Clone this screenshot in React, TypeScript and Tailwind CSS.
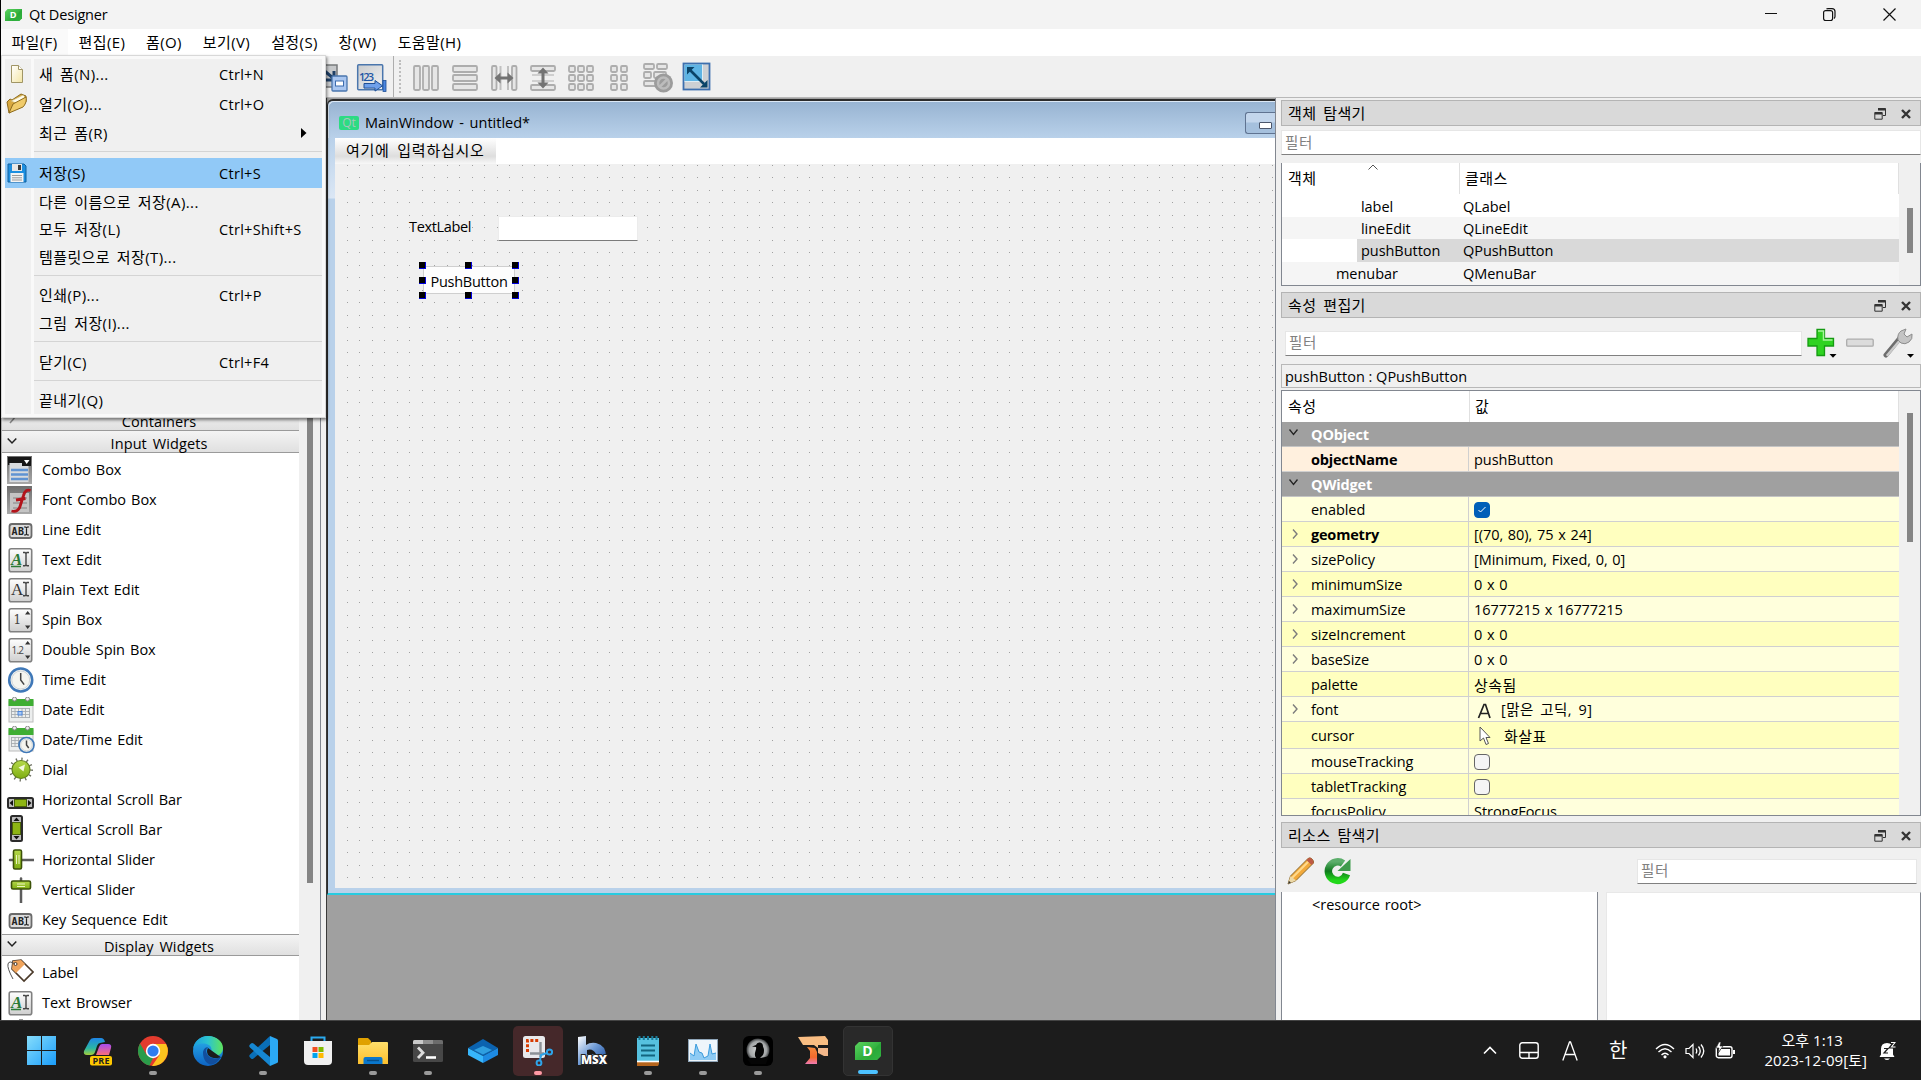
import type { ReactNode } from "react";
import clsx from "clsx";

const menus = ["파일(F)", "편집(E)", "폼(O)", "보기(V)", "설정(S)", "창(W)", "도움말(H)"];
const menuWidths = ["w-[67px]", "w-[68px]", "w-[56px]", "w-[69px]", "w-[67px]", "w-[59px]", "w-[85px]"];

const ko = "text-[15px] tracking-[0.4px] [word-spacing:2.5px]";

/* ---------- small shared pieces ---------- */

function Svg({ w = 26, h = 26, box, children, className }: { w?: number; h?: number; box?: string; children: ReactNode; className?: string }) {
  return (
    <svg width={w} height={h} viewBox={box ?? `0 0 ${w} ${h}`} className={clsx("shrink-0", className)} fill="none">
      {children}
    </svg>
  );
}

function Gradients() {
  return (
    <svg width="0" height="0" className="absolute">
      <defs>
        <linearGradient id="silver" x1="0" y1="0" x2="0" y2="1">
          <stop offset="0" stopColor="#ffffff" />
          <stop offset="1" stopColor="#cfcfcf" />
        </linearGradient>
        <linearGradient id="silver2" x1="0" y1="0" x2="1" y2="1">
          <stop offset="0" stopColor="#c9cbcd" />
          <stop offset="1" stopColor="#f1f2f3" />
        </linearGradient>
        <linearGradient id="dark" x1="0" y1="0" x2="0" y2="1">
          <stop offset="0" stopColor="#6e6e6e" />
          <stop offset="1" stopColor="#a9a9a9" />
        </linearGradient>
        <linearGradient id="winblue" x1="0" y1="0" x2="1" y2="1">
          <stop offset="0" stopColor="#86ddfb" />
          <stop offset="1" stopColor="#1a9dfb" />
        </linearGradient>
        <linearGradient id="green" x1="0" y1="0" x2="1" y2="1">
          <stop offset="0" stopColor="#5bd35f" />
          <stop offset="0.6" stopColor="#2fae3c" />
          <stop offset="1" stopColor="#44c950" />
        </linearGradient>
        <linearGradient id="lime" x1="0" y1="0" x2="0" y2="1">
          <stop offset="0" stopColor="#b6d94a" />
          <stop offset="1" stopColor="#7fae12" />
        </linearGradient>
        <linearGradient id="folder" x1="0" y1="0" x2="0" y2="1">
          <stop offset="0" stopColor="#ffdf6b" />
          <stop offset="1" stopColor="#fcbf2d" />
        </linearGradient>
        <linearGradient id="page" x1="0" y1="0" x2="1" y2="1">
          <stop offset="0" stopColor="#ffffff" />
          <stop offset="1" stopColor="#f3e5a3" />
        </linearGradient>
        <linearGradient id="edge1" x1="0" y1="0" x2="1" y2="0">
          <stop offset="0" stopColor="#1b9de0" />
          <stop offset="0.5" stopColor="#2cc4cf" />
          <stop offset="1" stopColor="#5fe45c" />
        </linearGradient>
        <linearGradient id="edge2" x1="0" y1="0" x2="0" y2="1">
          <stop offset="0" stopColor="#2bb3ec" />
          <stop offset="1" stopColor="#0d63c4" />
        </linearGradient>
        <linearGradient id="cop1" x1="0" y1="0" x2="0" y2="1">
          <stop offset="0" stopColor="#1f86e8" />
          <stop offset="0.6" stopColor="#2bb6a5" />
          <stop offset="1" stopColor="#a4cf3a" />
        </linearGradient>
        <linearGradient id="cop2" x1="0" y1="0" x2="0" y2="1">
          <stop offset="0" stopColor="#a64bf0" />
          <stop offset="1" stopColor="#fb6f78" />
        </linearGradient>
        <linearGradient id="refresh" x1="0" y1="0" x2="0" y2="1">
          <stop offset="0" stopColor="#5cae6b" />
          <stop offset="0.5" stopColor="#0f7a1d" />
          <stop offset="1" stopColor="#22d81a" />
        </linearGradient>
        <linearGradient id="crane" x1="0" y1="0" x2="0" y2="1">
          <stop offset="0" stopColor="#f58a3c" />
          <stop offset="0.6" stopColor="#f2692c" />
          <stop offset="1" stopColor="#f07bb4" />
        </linearGradient>
        <linearGradient id="bmsx" x1="0" y1="0" x2="1" y2="1">
          <stop offset="0" stopColor="#ffffff" />
          <stop offset="0.5" stopColor="#6d9ad6" />
          <stop offset="1" stopColor="#12408f" />
        </linearGradient>
        <radialGradient id="moon">
          <stop offset="0" stopColor="#d4d6d6" />
          <stop offset="0.75" stopColor="#a3a6a7" />
          <stop offset="1" stopColor="#3c3e3f" />
        </radialGradient>
      </defs>
    </svg>
  );
}

function DesignerLogo({ w, h }: { w: number; h: number }) {
  return (
    <Svg w={w} h={h} box="0 0 26 18">
      <path d="M4 0H26V14L22 18H0V4Z" fill="url(#green)" />
      <path d="M26 0V14L22 18H10Z" fill="#27a637" opacity=".55" />
      <text x="12.500" y="14" fontSize="14" fontWeight="700" fill="#fff" textAnchor="middle" fontFamily="Open Sans">
        D
      </text>
    </Svg>
  );
}

/* ---------- title bar, menu bar, toolbar ---------- */

function TitleBar() {
  return (
    <div className="flex h-[29px] shrink-0 items-center bg-[#f3f3f3] pl-[4px]">
      <DesignerLogo w={17} h={14} />
      <span className="ml-[7px] pt-px tracking-[-0.15px]">Qt Designer</span>
      <div className="ml-auto flex items-center">
        <Svg w={12} h={12} className="mr-[46px]">
          <path d="M0 4.500H12" stroke="#111" />
        </Svg>
        <Svg w={13} h={13} className="mr-[47px]">
          <path d="M.6 4.600a2 2 0 0 1 2-2h5a2 2 0 0 1 2 2v6a2 2 0 0 1-2 2h-5a2 2 0 0 1-2-2zM3.500 1.200Q4 .6 5 .6h4q3 0 3 3v5q0 1.200-1 1.800" stroke="#111" strokeWidth="1.200" />
        </Svg>
        <Svg w={13} h={13} className="mr-[25px]">
          <path d="M.5.5l12 12M12.500.5l-12 12" stroke="#111" strokeWidth="1.200" />
        </Svg>
      </div>
    </div>
  );
}

function MenuBar() {
  return (
    <div className={clsx("flex h-[27px] shrink-0 bg-white", ko)}>
      {menus.map((m, i) => (
        <div key={m} className={clsx("flex items-center justify-center pb-[2px] whitespace-nowrap", menuWidths[i], i === 0 && "bg-[#fafafa]")}>
          {m}
        </div>
      ))}
    </div>
  );
}

function Bars({ rects }: { rects: number[][] }) {
  return (
    <>
      {rects.map(([x, y, w, h], i) => (
        <rect key={i} x={x} y={y} width={w} height={h} rx="1.2" fill="#e6e6e6" stroke="#adadad" strokeWidth="1.8" />
      ))}
    </>
  );
}

function grid(cols: number[], rows: number[]) {
  return rows.flatMap((y) => cols.map((x) => [x, y, 6, 6]));
}

function ToolBar() {
  return (
    <div className="flex h-[42px] shrink-0 items-center border-b border-[#b8b8b8] bg-[#f0f0f0] pt-[2px] pl-[316px]">
      <Svg w={32} h={32}>
        <rect x="1" y="3" width="19" height="22" fill="#c6c8ca" stroke="#77797b" strokeWidth="1.5" />
        <path d="M4 6l12 10M17 9v9H9" stroke="#1e3f66" strokeWidth="3" />
        <rect x="15" y="14" width="15" height="15" rx="1" fill="#a9c6f0" stroke="#4a76ad" strokeWidth="1.3" />
        <rect x="18.500" y="19" width="8" height="5" fill="#fff" stroke="#3c6cae" />
      </Svg>
      <Svg w={32} h={32} className="ml-[7px]">
        <rect x="1.700" y="2.700" width="25" height="25" rx="1" fill="url(#silver2)" stroke="#4a76ad" strokeWidth="1.5" />
        <text x="3" y="19" fontSize="11" fill="#1e56a5" fontFamily="Open Sans" fontWeight="600" textLength="15">
          123
        </text>
        <path d="M8 21.500h11v-3l7.500 5.300-7.500 5.300v-3H8z" fill="#6fa0ea" stroke="#1f4f94" />
        <rect x="27" y="18.500" width="3" height="11" fill="#4b86e0" stroke="#1f4f94" strokeWidth=".8" />
      </Svg>
      <div className="-mt-[2px] ml-[5px] h-[41px] w-px bg-[#adadad]" />
      <div className="-mt-[2px] ml-[5px] h-[33px] border-l-2 border-dotted border-[#bdbdbd]" />
      <Svg w={28} h={28} className="ml-[11px]">
        <Bars rects={[[2, 2, 6, 24], [11, 2, 6, 24], [20, 2, 6, 24]]} />
      </Svg>
      <Svg w={28} h={28} className="ml-[11px]">
        <Bars rects={[[2, 2, 24, 6], [2, 11, 24, 6], [2, 20, 24, 6]]} />
      </Svg>
      <Svg w={28} h={28} className="ml-[11px]">
        <Bars rects={[[2, 2, 4.500, 24], [22, 2, 4.500, 24]]} />
        <path d="M10.500 2v24M18 2v24" stroke="#c0c0c0" strokeWidth="2" />
        <path d="M4.500 14l6-5.500v4h7v-4l6 5.500-6 5.500v-4h-7v4z" fill="#737373" />
      </Svg>
      <Svg w={28} h={28} className="ml-[11px]">
        <Bars rects={[[2, 2, 24, 5], [2, 21, 24, 5]]} />
        <path d="M3 11h22M3 17h22" stroke="#c4c4c4" strokeWidth="1.500" />
        <path d="M14 3.500l5.500 6h-4v9h4l-5.500 6-5.500-6h4v-9h-4z" fill="#737373" />
      </Svg>
      <Svg w={28} h={28} className="ml-[10px]">
        <Bars rects={grid([2, 11, 20], [2, 11, 20])} />
      </Svg>
      <Svg w={28} h={28} className="ml-[10px]">
        <Bars rects={grid([6, 16], [2, 11, 20])} />
      </Svg>
      <Svg w={32} h={32} className="ml-[9px]">
        <Bars rects={[[2, 2, 10, 5], [15, 2, 10, 5], [2, 10, 7, 6], [12, 10, 12, 6], [2, 19, 13, 5]]} />
        <circle cx="21.500" cy="21" r="9.500" fill="#9c9c9c" />
        <circle cx="21.500" cy="21" r="5.500" stroke="#bcbcbc" strokeWidth="2.500" />
        <path d="M17.500 25l8-8" stroke="#bcbcbc" strokeWidth="2.500" />
      </Svg>
      <Svg w={30} h={30} className="mb-[2px] ml-[8px]">
        <rect x="1.500" y="1.500" width="26" height="26" fill="#cdd0d3" stroke="#3d6fae" strokeWidth="1.800" />
        <rect x="2.500" y="2.500" width="18" height="17" fill="#5eb4e4" />
        <path d="M2.500 19.500h18v-17" stroke="#fff" strokeOpacity=".7" />
        <path d="M8 8l14 14" stroke="#0b4468" strokeWidth="2.600" />
        <path d="M5 5h7.500L5 12.500zM25.500 25.500H18l7.500-7.500z" fill="#0b4468" />
      </Svg>
    </div>
  );
}

/* ---------- file menu popup ---------- */

type MenuEntry = { label: string; keys?: string; icon?: ReactNode; submenu?: boolean; active?: boolean; h: string } | { gap: string };

const fileMenu: MenuEntry[] = [
  {
    label: "새 폼(N)...",
    keys: "Ctrl+N",
    h: "h-[30px]",
    icon: (
      <Svg w={14} h={20}>
        <path d="M1.500 1.500h7l4 4v13h-11z" fill="url(#page)" stroke="#a09565" />
        <path d="M8.500 1.500v4h4" fill="#fff" stroke="#a09565" />
      </Svg>
    ),
  },
  {
    label: "열기(O)...",
    keys: "Ctrl+O",
    h: "h-[30px]",
    icon: (
      <Svg w={22} h={22}>
        <path d="M1 9l3-3 2 1 9-6 5 2v6L3 20z" fill="#d9a93f" stroke="#8d6a1c" />
        <path d="M5 8l12-6 2 2-4 8z" fill="#fffbe8" stroke="#c9b26a" strokeWidth=".6" />
        <path d="M3 20L7 11l13-7c1 4-1 8-3 10z" fill="#f0cb6a" stroke="#8d6a1c" />
      </Svg>
    ),
  },
  { label: "최근 폼(R)", submenu: true, h: "h-[28px]" },
  { gap: "h-[11px] pt-[4px]" },
  {
    label: "저장(S)",
    keys: "Ctrl+S",
    active: true,
    h: "h-[30px]",
    icon: (
      <Svg w={20} h={20}>
        <path d="M1 1h16l2 2v16H1z" fill="#1d8fe0" stroke="#10609f" />
        <rect x="5" y="1" width="10" height="7" fill="#e8e8e8" />
        <rect x="11" y="2" width="3" height="5" fill="#3a3a3a" />
        <rect x="3.500" y="10" width="13" height="9" fill="#f4f4f4" />
        <path d="M5 12.500h10M5 14.800h10M5 17h10" stroke="#9a9a9a" />
      </Svg>
    ),
  },
  { label: "다른 이름으로 저장(A)...", h: "h-[28px]" },
  { label: "모두 저장(L)", keys: "Ctrl+Shift+S", h: "h-[27px]" },
  { label: "템플릿으로 저장(T)...", h: "h-[28px]" },
  { gap: "h-[11px] pt-[4px]" },
  { label: "인쇄(P)...", keys: "Ctrl+P", h: "h-[27px]" },
  { label: "그림 저장(I)...", h: "h-[28px]" },
  { gap: "h-[12px] pt-[4px]" },
  { label: "닫기(C)", keys: "Ctrl+F4", h: "h-[27px]" },
  { gap: "h-[10px] pt-[4px]" },
  { label: "끝내기(Q)", h: "h-[28px]" },
];

function FileMenu() {
  return (
    <div className="absolute top-[55px] left-[1px] z-10 w-[325px] border border-[#d8d8d8] bg-[#f9f9f9] px-[3px] py-[3px] shadow-[1px_2px_3px_rgba(0,0,0,0.5)]">
      <div className="bg-[linear-gradient(90deg,#f0f0f0_26px,#f9f9f9_26px,#f9f9f9_29px,#f0f0f0_29px)]">
        {fileMenu.map((e, i) =>
          "gap" in e ? (
            <div key={i} className={clsx("pl-[29px]", e.gap)}>
              <div className="h-px bg-[#d4d4d4]" />
            </div>
          ) : (
            <div key={i} className={clsx("flex items-center", e.h, e.active && "bg-[#91c9f7]")}>
              <div className="flex w-[24px] justify-center">{e.icon}</div>
              <span className={clsx("ml-[10px] w-[180px] pb-[1px] whitespace-nowrap", ko)}>{e.label}</span>
              <span className="w-[82px] pt-[1px] tracking-[0.3px] whitespace-nowrap">{e.keys}</span>
              {e.submenu && (
                <Svg w={6} h={10}>
                  <path d="M0 0l5.500 5L0 10z" fill="#000" />
                </Svg>
              )}
            </div>
          ),
        )}
      </div>
    </div>
  );
}

/* ---------- widget box ---------- */

function Tile({ children }: { children: ReactNode }) {
  return (
    <Svg>
      <rect x="2.200" y="1.700" width="22.500" height="23" rx="2" fill="url(#silver)" stroke="#808080" strokeWidth="1.600" />
      {children}
    </Svg>
  );
}

function EditorTile({ color, line }: { color: string; line?: boolean }) {
  return (
    <Tile>
      <text x="4" y="18" fontSize="17" fontFamily="Liberation Serif" fontStyle={line ? "italic" : "normal"} fontWeight={line ? 700 : 400} fill={color}>
        A
      </text>
      {line && <path d="M4 19.500h10" stroke={color} strokeWidth="1.500" />}
      <path d="M16 5.500h2l1 1 1-1h2M19 6v12M16 18.800h2l1-1 1 1h2" stroke="#444" strokeWidth="1.400" />
    </Tile>
  );
}

function AbiIcon() {
  return (
    <Svg className="mt-[2px]">
      <rect x="2.500" y="6" width="22" height="14" rx="2.500" fill="#dcdcdc" stroke="#6a6a6a" strokeWidth="1.800" />
      <text x="4.500" y="16.500" fontSize="10" fontWeight="700" fontFamily="DejaVu Sans Mono" fill="#222" textLength="12.500">
        AB
      </text>
      <path d="M17 9h1.500l1 .8 1-.8H22M19.500 9.500v7M17 17h1.500l1-.8 1 .8H22" stroke="#222" strokeWidth="1.200" />
    </Svg>
  );
}

function Clock({ cx, cy, r }: { cx: number; cy: number; r: number }) {
  return (
    <>
      <circle cx={cx} cy={cy} r={r} fill="#f5f5ef" stroke="#3f78b8" strokeWidth={r / 4.5} />
      <circle cx={cx} cy={cy} r={r * 0.78} stroke="#c5ccd2" strokeWidth=".8" />
      <path d={`M${cx} ${cy - r * 0.6}V${cy}l${r * 0.3} ${r * 0.4}`} stroke="#444" strokeWidth="1.500" />
    </>
  );
}

function Calendar() {
  return (
    <>
      <rect x="2" y="4" width="24" height="21" fill="#eceeee" stroke="#bcbcbc" />
      <rect x="1.500" y="2" width="25" height="7" fill="#3fae33" />
      <circle cx="7.500" cy="2" r="2" fill="#eee" stroke="#888" />
      <circle cx="20.500" cy="2" r="2" fill="#eee" stroke="#888" />
      <path d="M4 11.500h19M4 14.500h19M4 17.500h19M4 20.500h19M4.500 11v10M8 11v10M11.500 11v10M15 11v10M18.500 11v10M22.500 11v10" stroke="#a7abb0" strokeWidth=".9" />
    </>
  );
}

function SpinArrows() {
  return <path d="M18 7.500l2.700-3.500 2.700 3.500zM18 18.500l2.700 3.500 2.700-3.500z" fill="#333" />;
}

const inputWidgets: [string, ReactNode][] = [
  [
    "Combo Box",
    <Svg h={28} key="i">
      <rect x="0" y="0" width="25" height="28" fill="url(#dark)" />
      <rect x="1" y="1" width="23" height="8" fill="#161616" />
      <rect x="2.500" y="7" width="19" height="19" fill="#d7dadd" />
      <rect x="15" y="2" width="9" height="8" fill="#161616" />
      <path d="M17 4h5.500l-2.800 4z" fill="#fff" />
      <path d="M4 14h17M4 18.500h17M4 23h17" stroke="#5f93d2" strokeWidth="2.600" />
    </Svg>,
  ],
  [
    "Font Combo Box",
    <Svg h={28} key="i">
      <rect x="0" y="0" width="25" height="28" fill="url(#dark)" />
      <rect x="3" y="7" width="19" height="19" fill="#c4c4c4" />
      <path d="M6 12h14M6 17h14M6 22h14" stroke="#a4a4a4" strokeWidth="2" />
      <path d="M23.500 4.500q-5-2-7 5l-3.500 11q-2 6-8.500 4.500M9 14l9.500-1.500" stroke="#b3141b" strokeWidth="2.800" />
    </Svg>,
  ],
  ["Line Edit", <AbiIcon key="i" />],
  ["Text Edit", <EditorTile key="i" color="#2b7a36" line />],
  ["Plain Text Edit", <EditorTile key="i" color="#333" />],
  [
    "Spin Box",
    <Tile key="i">
      <text x="6.500" y="17" fontSize="12" fontFamily="DejaVu Serif" fill="#444">
        1
      </text>
      <SpinArrows />
    </Tile>,
  ],
  [
    "Double Spin Box",
    <Tile key="i">
      <text x="4.500" y="17" fontSize="10" fontFamily="Open Sans" fill="#444" textLength="12.500">
        1.2
      </text>
      <SpinArrows />
    </Tile>,
  ],
  [
    "Time Edit",
    <Svg w={27} key="i">
      <Clock cx={13.700} cy={13} r={11.500} />
    </Svg>,
  ],
  [
    "Date Edit",
    <Svg w={27} key="i">
      <Calendar />
      <rect x="11" y="14.500" width="4" height="3.500" fill="#a9c9f5" stroke="#4b86dc" />
    </Svg>,
  ],
  [
    "Date/Time Edit",
    <Svg w={28} h={28} key="i">
      <Calendar />
      <Clock cx={19.500} cy={19} r={7.500} />
    </Svg>,
  ],
  [
    "Dial",
    <Svg key="i">
      <circle cx="14" cy="12.500" r="10.500" stroke="#6b6e60" strokeWidth="3" strokeDasharray="1.300 4.200" />
      <circle cx="14" cy="12.500" r="9" fill="url(#lime)" stroke="#61801a" strokeWidth="1.200" />
      <path d="M18 7.500l-1.500 7-5-4z" fill="#f4f9dd" />
    </Svg>,
  ],
  [
    "Horizontal Scroll Bar",
    <Svg w={27} key="i" className="mt-[6px]">
      <rect x="1" y="8" width="25" height="10" rx="1.500" fill="#bdbdbd" stroke="#2b2b2b" strokeWidth="2" />
      <rect x="7.500" y="9.500" width="12" height="7" fill="#8db514" stroke="#4a6208" />
      <path d="M6 10v6l-3.500-3zM21 10v6l3.500-3z" fill="#111" />
    </Svg>,
  ],
  [
    "Vertical Scroll Bar",
    <Svg w={27} h={28} key="i" className="mb-[3px]">
      <rect x="4" y="1" width="11" height="25" rx="1.500" fill="#bdbdbd" stroke="#2b2b2b" strokeWidth="2" />
      <rect x="5.500" y="7.500" width="8" height="12" fill="#8db514" stroke="#4a6208" />
      <path d="M6.500 6h6L9.500 2.500zM6.500 21h6l-3 3.500z" fill="#111" />
    </Svg>,
  ],
  [
    "Horizontal Slider",
    <Svg w={27} key="i">
      <path d="M3 13h24" stroke="#5c5c5c" strokeWidth="2.500" strokeLinecap="round" />
      <rect x="6.500" y="3" width="8" height="19" rx="1.500" fill="url(#lime)" stroke="#3c5208" strokeWidth="1.600" />
      <path d="M9.500 8v9M12 8v9" stroke="#ebf5c0" />
    </Svg>,
  ],
  [
    "Vertical Slider",
    <Svg w={27} key="i">
      <path d="M14 1.500v24" stroke="#5c5c5c" strokeWidth="2.500" strokeLinecap="round" />
      <rect x="4.500" y="4" width="19" height="8" rx="1.500" fill="url(#lime)" stroke="#3c5208" strokeWidth="1.600" />
      <path d="M10 7h8M10 9.500h8" stroke="#ebf5c0" />
    </Svg>,
  ],
  ["Key Sequence Edit", <AbiIcon key="i" />],
];

const displayWidgets: [string, ReactNode][] = [
  [
    "Label",
    <Svg w={27} h={26} key="i" className="mb-[3px]">
      <path d="M6 2l8-1 12 12-9 9L5 10z" fill="#fff" stroke="#4b3a2a" strokeWidth="1.600" />
      <path d="M6 2l8-1 4 4-9 9-4-4z" fill="#f0a45c" />
      <circle cx="8.500" cy="5" r="1.500" fill="#fff" stroke="#4b3a2a" />
      <path d="M8 5Q2 1 1 5t5 15" stroke="#555" />
    </Svg>,
  ],
  ["Text Browser", <EditorTile key="i" color="#2b7a36" line />],
];

function WidgetRow({ name, icon }: { name: string; icon: ReactNode }) {
  return (
    <div className="flex h-[30px] shrink-0 items-center pl-[5px]">
      <div className="flex w-[28px] items-center">{icon}</div>
      <span className="ml-[7px] tracking-[-0.05px] whitespace-nowrap [word-spacing:1.5px]">{name}</span>
    </div>
  );
}

function CategoryHeader({ name, open = true, className }: { name: string; open?: boolean; className?: string }) {
  return (
    <div className={clsx("flex h-[22px] w-[297px] shrink-0 items-center border-b border-[#9a9a9a] bg-linear-to-b from-[#f4f4f4] to-[#e0e0e0] pl-[5px]", className)}>
      <Svg w={10} h={10} className="mb-[2px]">
        <path d={open ? "M.7 2.500L5 7l4.300-4.500" : "M3 0l4 4.500L3 9"} stroke={open ? "#222" : "#888"} strokeWidth="1.500" />
      </Svg>
      <span className="flex-1 pt-[4px] pl-[2px] text-center tracking-[0.1px] [word-spacing:2px]">{name}</span>
    </div>
  );
}

function WidgetBox() {
  return (
    <div className="flex w-[326px] shrink-0 border-r border-[#3a3a3a] bg-[#f0f0f0]">
      <div className="flex w-[298px] flex-col overflow-hidden border-l border-[#b0b0b0] bg-white">
        <div className="h-[311px] shrink-0" />
        <CategoryHeader name="Containers" open={false} />
        <CategoryHeader name="Input Widgets" />
        <div className="mt-[2px] flex flex-col">
          {inputWidgets.map(([name, icon]) => (
            <WidgetRow key={name} name={name} icon={icon} />
          ))}
        </div>
        <CategoryHeader name="Display Widgets" className="-mt-px border-t" />
        <div className="mt-[2px] flex flex-col">
          {displayWidgets.map(([name, icon]) => (
            <WidgetRow key={name} name={name} icon={icon} />
          ))}
        </div>
        <div className="mt-[1px] ml-[17px] h-[2px] w-[4px] shrink-0 bg-[#999]" />
      </div>
      <div className="w-[22px] border-r border-[#828790] px-[8px] pt-[60px]">
        <div className="h-[725px] w-[6px] bg-[#858585]" />
      </div>
    </div>
  );
}

/* ---------- form editor ---------- */

function Handle({ className }: { className: string }) {
  return <div className={clsx("absolute size-[7px] border-r border-b border-[#0000e0] bg-black", className)} />;
}

function FormEditor() {
  return (
    <div className="flex w-[949px] shrink-0 flex-col overflow-hidden border-r border-[#828790] bg-[#a0a0a0] pt-px">
      <div className="flex h-[796px] w-full shrink-0 flex-col rounded-tl-md border-t-2 border-b-2 border-l border-t-[#2b2b2b] border-b-[#27cbe0] border-l-[#2b2b2b] bg-[#b9d1ea]">
        <div className="flex h-[37px] shrink-0 items-center rounded-tl-md border-t border-l border-[#dce8f5] bg-linear-to-b from-[#98b4d2] to-[#b9d1ea] pt-[5px] pl-[10px]">
          <div className="flex h-[14px] w-[20px] items-center justify-center rounded-[2px] bg-[#2ddb83] text-[12px] text-[#a9c4bd]">Qt</div>
          <span className="ml-[6px] whitespace-nowrap [word-spacing:2px]">MainWindow - untitled*</span>
          <div className="ml-auto flex h-[22px] w-[30px] items-center justify-end rounded-l-[3px] border border-r-0 border-[#5f7391] bg-linear-to-b from-[#c3d6ec] from-45% to-[#a5c0dd] to-50% pt-[6px] pr-[3px]">
            <div className="h-[7px] w-[13px] rounded-[1px] border border-[#4b566b] bg-white" />
          </div>
        </div>
        <div className="flex min-h-0 flex-1">
          <div className="w-[7px] shrink-0 bg-[linear-gradient(180deg,#b9d1ea,#dbe7f5_60px,#b9d1ea_61px)]" />
          <div className="flex flex-1 flex-col">
            <div className="flex h-[26px] shrink-0 bg-white">
              <div className="flex w-[161px] items-center bg-linear-to-b from-white via-[#dedede] via-70% to-[#f8f8f8] pb-[2px] pl-[11px] text-[15px] tracking-[0.75px] whitespace-nowrap [word-spacing:3px]">여기에 입력하십시오</div>
            </div>
            <div className="relative flex-1 bg-[#f0f0f0]">
              <svg className="absolute inset-0" width="100%" height="714">
                <defs>
                  <pattern id="dots" x="12" y="1" width="25" height="25" patternUnits="userSpaceOnUse">
                    <path d="M0 0h1v1H0zM12 0h1v1h-1zM0 12h1v1H0zM12 12h1v1h-1z" fill="#a0a0a0" />
                  </pattern>
                </defs>
                <rect width="100%" height="100%" fill="url(#dots)" />
              </svg>
              <span className="absolute top-[53px] left-[74px] tracking-[-0.35px]">TextLabel</span>
              <div className="absolute top-[52px] left-[163px] h-[25px] w-[140px] border border-[#ececec] border-b-[#7b7b7b] bg-white" />
              <div className="absolute top-[102px] left-[88px] flex h-[28px] w-[92px] items-center justify-center border border-[#cfcfcf] bg-[#fdfdfd] pt-[3px] tracking-[-0.25px]">PushButton</div>
              <Handle className="top-[98px] left-[84px]" />
              <Handle className="top-[98px] left-[130px]" />
              <Handle className="top-[98px] left-[177px]" />
              <Handle className="top-[113px] left-[84px]" />
              <Handle className="top-[113px] left-[177px]" />
              <Handle className="top-[128px] left-[84px]" />
              <Handle className="top-[128px] left-[130px]" />
              <Handle className="top-[128px] left-[177px]" />
            </div>
            <div className="h-[5px] shrink-0 bg-[#b9d1ea]" />
          </div>
        </div>
      </div>
    </div>
  );
}

/* ---------- right docks ---------- */

function DockTitle({ children }: { children: ReactNode }) {
  return (
    <div className="flex h-[26px] shrink-0 items-center border border-[#b4b4b4] bg-[#d9d9d9] pl-[6px]">
      <span className={clsx("flex-1", ko)}>{children}</span>
      <Svg w={12} h={12} className="mt-[2px] mr-[15px]">
        <path d="M4 .5h7.500v7H9M.8 4.500h7.400v6.700H.8z" stroke="#333" />
        <path d="M4 1.500h7.500M.8 5.500h7.400" stroke="#333" strokeWidth="2" />
      </Svg>
      <Svg w={10} h={10} className="mt-[2px] mr-[9px]">
        <path d="M1 1l8 8M9 1L1 9" stroke="#333" strokeWidth="2.400" />
      </Svg>
    </div>
  );
}

function Filter({ className }: { className?: string }) {
  return (
    <div className={clsx("flex h-[25px] shrink-0 items-center border border-[#e6e6e6] border-b-[#808080] bg-white pl-[3px] tracking-[0.6px] text-[#808080]", className)}>
      필터
    </div>
  );
}

const objects = [
  { name: "label", cls: "QLabel", row: "h-[22px] bg-white", pad: "pl-[79px]" },
  { name: "lineEdit", cls: "QLineEdit", row: "h-[22px] bg-[#f5f5f5]", pad: "pl-[79px]" },
  { name: "pushButton", cls: "QPushButton", row: "h-[23px] bg-[linear-gradient(90deg,#fff_75px,#d9d9d9_75px)]", pad: "pl-[79px]" },
  { name: "menubar", cls: "QMenuBar", row: "h-[23px] bg-[#f5f5f5]", pad: "pl-[54px]" },
];

function ObjectInspector() {
  return (
    <div className="mt-[8px] flex h-[123px] shrink-0 border border-t-0 border-[#828790] bg-[#f0f0f0]">
      <div className="w-[617px] bg-white">
        <div className={clsx("flex h-[31px] items-center", ko)}>
          <div className="relative flex h-full w-[178px] items-center border-r border-[#e0e0e0] pb-[1px] pl-[6px]">
            객체
            <svg width="10" height="6" className="absolute top-[1px] left-[86px]" fill="none">
              <path d="M.5 5.500L5 1l4.500 4.500" stroke="#555" />
            </svg>
          </div>
          <div className="flex h-full flex-1 items-center border-r border-[#e0e0e0] pb-[1px] pl-[5px]">클래스</div>
        </div>
        <div className="mt-[1px]">
          {objects.map((o) => (
            <div key={o.name} className={clsx("flex items-center tracking-[-0.05px]", o.row)}>
              <span className={clsx("w-[181px] pt-[1px]", o.pad)}>{o.name}</span>
              <span className="pt-[1px]">{o.cls}</span>
            </div>
          ))}
        </div>
      </div>
      <div className="ml-[8px] pt-[45px]">
        <div className="h-[45px] w-[6px] bg-[#858585]" />
      </div>
    </div>
  );
}

function Checkbox({ checked }: { checked?: boolean }) {
  return (
    <div className={clsx("flex size-[16px] items-center justify-center rounded-[4px] border", checked ? "border-[#005fb8] bg-[#005fb8]" : "border-[#666] bg-[#f5f5f5]")}>
      {checked && (
        <Svg w={10} h={8}>
          <path d="M1.500 4l2 2 5-5" stroke="#fff" />
        </Svg>
      )}
    </div>
  );
}

type Prop = { name: string; value: ReactNode; bold?: boolean; expand?: boolean; tall?: boolean };

const properties: Prop[] = [
  { name: "enabled", value: <Checkbox checked /> },
  { name: "geometry", value: "[(70, 80), 75 x 24]", bold: true, expand: true },
  { name: "sizePolicy", value: "[Minimum, Fixed, 0, 0]", expand: true },
  { name: "minimumSize", value: "0 x 0", expand: true },
  { name: "maximumSize", value: "16777215 x 16777215", expand: true },
  { name: "sizeIncrement", value: "0 x 0", expand: true },
  { name: "baseSize", value: "0 x 0", expand: true },
  { name: "palette", value: <span className={ko}>상속됨</span> },
  {
    name: "font",
    expand: true,
    value: (
      <>
        <Svg w={15} h={16} className="mt-[2px] mr-[9px] ml-[3px]">
          <path d="M1.500 15L7 1.500h1.500L13 15M3.500 10.500h8" stroke="#222" strokeWidth="1.700" />
        </Svg>
        <span className="tracking-[0.5px] [word-spacing:2px]">[맑은 고딕, 9]</span>
      </>
    ),
  },
  {
    name: "cursor",
    tall: true,
    value: (
      <>
        <Svg w={12} h={20} className="mr-[13px] ml-[5px]">
          <path d="M1 1v14l3.500-3 2.500 6.500 2.500-1L7 11.500h4z" fill="#fff" stroke="#555" />
        </Svg>
        <span className={ko}>화살표</span>
      </>
    ),
  },
  { name: "mouseTracking", value: <Checkbox /> },
  { name: "tabletTracking", value: <Checkbox /> },
  { name: "focusPolicy", value: "StrongFocus" },
];

function GroupRow({ name }: { name: string }) {
  return (
    <div className="flex h-[25px] shrink-0 items-center border-b border-[#c4c4c4] bg-[#a0a0a0] pl-[6px] font-bold text-white">
      <Svg w={11} h={9} className="mr-[12px] mb-[4px]">
        <path d="M1.500 1.500l4 5 4-5" stroke="#222" strokeWidth="1.300" />
      </Svg>
      <span className="pt-[1px] tracking-[-0.15px]">{name}</span>
    </div>
  );
}

function PropertyRow({ prop, className }: { prop: Prop; className: string }) {
  return (
    <div className={clsx("flex shrink-0 border-b border-[#d0d0d0]", prop.tall ? "h-[27px]" : "h-[25px]", className)}>
      <div className="flex w-[187px] items-center border-r border-[#d0d0d0] pl-[9px]">
        <Svg w={8} h={12} className="mr-[12px]">
          {prop.expand && <path d="M2 1.500l4 4.500-4 4.500" stroke="#7c7c7c" strokeWidth="1.400" />}
        </Svg>
        <span className={clsx("pt-[1px]", prop.bold ? "font-bold tracking-[-0.2px]" : "tracking-[-0.05px]")}>{prop.name}</span>
      </div>
      <div className="flex flex-1 items-center pt-[1px] pl-[5px] tracking-[-0.05px] [word-spacing:1px]">{prop.value}</div>
    </div>
  );
}

function PropertyEditor() {
  return (
    <>
      <div className="mt-[6px] flex h-[38px] shrink-0 items-center pl-[4px]">
        <Filter className="w-[517px]" />
        <Svg w={31} h={30} className="ml-[4px]">
          <path d="M11 1.500h7.500v9h9V18h-9v9.500H11V18H2v-7.500h9z" fill="#2fd321" stroke="#159a12" strokeWidth="1.300" />
          <path d="M12 3h5.500v9h9" stroke="#a6f59a" strokeWidth="1.500" />
          <path d="M23.500 26h7L27 29.700z" fill="#000" />
        </Svg>
        <Svg w={28} h={10} className="ml-[9px]">
          <rect x=".7" y="1.200" width="26.500" height="7" rx="1" fill="#dcdcdc" stroke="#acacac" strokeWidth="1.300" />
        </Svg>
        <Svg w={32} h={30} className="ml-[9px]">
          <path d="M3 27L17 10" stroke="#6d6d6d" strokeWidth="5" strokeLinecap="round" />
          <path d="M4.500 27L18 11" stroke="#cacaca" strokeWidth="2.500" strokeLinecap="round" />
          <path d="M15 12q-1-6 3-9l5-2-2 5 3 3 5-3q1 5-3 8t-8 1z" fill="#c4c4c4" stroke="#8d8d8d" />
          <path d="M24 26h7l-3.500 3.700z" fill="#000" />
        </Svg>
      </div>
      <div className="mt-[2px] flex h-[24px] shrink-0 items-center border border-[#b8b8b8] pt-[2px] pl-[3px]">pushButton : QPushButton</div>
      <div className="mt-[2px] flex h-[426px] shrink-0 border border-[#828790] bg-[#f0f0f0]">
        <div className="flex w-[617px] flex-col overflow-hidden bg-white">
          <div className={clsx("flex h-[31px] shrink-0 items-center", ko)}>
            <div className="flex h-full w-[188px] items-center border-r border-[#e0e0e0] pb-[1px] pl-[6px]">속성</div>
            <div className="flex h-full flex-1 items-center border-r border-[#e0e0e0] pb-[1px] pl-[5px]">값</div>
          </div>
          <GroupRow name="QObject" />
          <PropertyRow prop={{ name: "objectName", value: "pushButton", bold: true }} className="bg-[#fff0de]" />
          <GroupRow name="QWidget" />
          {properties.map((p, i) => (
            <PropertyRow key={p.name} prop={p} className={i % 2 ? "bg-[#ffffbf]" : "bg-[#ffffdc]"} />
          ))}
        </div>
        <div className="ml-[8px] pt-[22px]">
          <div className="h-[129px] w-[6px] bg-[#858585]" />
        </div>
      </div>
    </>
  );
}

function ResourceBrowser() {
  return (
    <>
      <div className="flex h-[44px] shrink-0 items-center pt-[2px] pr-[4px] pl-[5px]">
        <Svg w={30} h={30}>
          <path d="M2 28l2.500-8L22 2.500q2-1.500 4 .5t1.500 4L10 24.500z" fill="#f2a93b" stroke="#8a6a2e" />
          <path d="M6 22L23.500 4.500" stroke="#ffd98c" strokeWidth="2" />
          <path d="M22 2.500q2-1.500 4 .5t1.500 4L25.500 9 20.500 4.200z" fill="#bd5a45" />
          <path d="M2 28l2.500-8L10 24.500z" fill="#ecd9a8" />
          <path d="M2 28l1-3 2 1.500z" fill="#333" />
        </Svg>
        <Svg w={30} h={28} className="ml-[7px]">
          <path d="M23.500 17A9.300 9.300 0 1 1 20 6.500" stroke="url(#refresh)" strokeWidth="7.500" />
          <path d="M27.500 2v12H14.500z" fill="#3f9b4c" />
        </Svg>
        <Filter className="ml-auto w-[280px]" />
      </div>
      <div className="flex min-h-0 flex-1">
        <div className="w-[317px] border-r border-l border-[#828790] bg-white pt-[3px] pl-[30px] [word-spacing:1px]">&lt;resource root&gt;</div>
        <div className="ml-[8px] flex-1 border-t border-r border-l border-[#e8e8e8] border-r-[#828790] bg-white" />
      </div>
    </>
  );
}

/* ---------- taskbar ---------- */

function TaskButton({ children, mark, className }: { children: ReactNode; mark?: string; className?: string }) {
  return (
    <div className={clsx("relative flex h-[50px] w-[50px] items-center justify-center rounded-[5px]", className)}>
      {children}
      {mark && <div className={clsx("absolute bottom-[1px] h-[4px] rounded-full", mark)} />}
    </div>
  );
}

const idle = "w-[8px] bg-[#9a9a9a]";

function Taskbar() {
  return (
    <div className="flex h-[60px] shrink-0 items-center border-t border-[#444] bg-[#1c1c1c] pl-[16px] text-white">
      <TaskButton>
        <Svg w={29} h={29}>
          <path d="M0 0h14v14H0zM15 0h14v14H15zM0 15h14v14H0zM15 15h14v14H15z" fill="url(#winblue)" />
        </Svg>
      </TaskButton>
      <TaskButton className="ml-[7px]">
        <Svg w={30} h={30}>
          <path d="M7 4q1-2 4-2h7q3 0 4 4l-5 1q-2 0-3 3l-2 6q-1 3-4 3H4q-4 0-3-4z" fill="url(#cop1)" />
          <path d="M19 8h6q4 0 3 4l-2 7H13l3-8q1-3 3-3z" fill="url(#cop2)" />
          <rect x="7" y="20" width="22" height="9.500" rx="2" fill="#ffc800" />
          <text x="18" y="28" fontSize="9" fontWeight="700" fill="#222" textAnchor="middle" fontFamily="Open Sans" textLength="17">
            PRE
          </text>
        </Svg>
      </TaskButton>
      <TaskButton mark={idle} className="ml-[5px]">
        <Svg w={30} h={30}>
          <circle cx="15" cy="15" r="15" fill="#e33b2e" />
          <path d="M2 7.500L8.500 18.700 15 22l-3.500 7.600A15 15 0 0 1 2 7.500z" fill="#2a9c4a" />
          <path d="M28 8H15l6.500 11L14 30A15 15 0 0 0 28 8z" fill="#fcc31e" />
          <circle cx="15" cy="15" r="7.200" fill="#fff" />
          <circle cx="15" cy="15" r="5.600" fill="#2f7cf0" />
        </Svg>
      </TaskButton>
      <TaskButton className="ml-[5px]">
        <Svg w={30} h={30}>
          <circle cx="15" cy="15" r="15" fill="url(#edge2)" />
          <path d="M0 13C1 5 8 0 15 0c8 0 15 5 15 12 0 5-4 8-8 8-3 0-5-1-5-2.500 0-1 1.500-1.500 1.500-4C18.500 10 15 7.500 10 7.500 5 7.500 1 10 0 13z" fill="url(#edge1)" />
          <path d="M10 17c0-4 3-6 5-6-2 2-2.500 4-1 7 2 4 7 6 14 3-3 5-7 7.500-10 7.500-4 0-8-5-8-11.500z" fill="#124f9e" />
          <path d="M15 12c-2 3-1 8 4 9.500 3 1 7 .5 9-.5.8-.4 1 .2.600.8" fill="#1c1c1c" />
        </Svg>
      </TaskButton>
      <TaskButton mark={idle} className="ml-[5px]">
        <Svg w={30} h={30}>
          <path d="M22 0L2 18.500q-1.500 1.500 0 3l1 1q1 1 2.500 0L22 9z" fill="#0a6fb8" />
          <path d="M22 30L2 11.500q-1.500-1.500 0-3l1-1q1-1 2.500 0L22 21z" fill="#1687d2" />
          <path d="M22 0l7 3q1 .5 1 1.500v21q0 1-1 1.500l-7 3z" fill="#2ba9f5" />
        </Svg>
      </TaskButton>
      <TaskButton className="ml-[5px]">
        <Svg w={30} h={30}>
          <path d="M8.500 8V1.500h13V8" stroke="#2aa9ee" strokeWidth="2" />
          <path d="M1 5h28v20q0 4-4 4H5q-4 0-4-4z" fill="#f0f0f0" />
          <path d="M9.500 11h5v5h-5z" fill="#f25022" />
          <path d="M15.500 11h5v5h-5z" fill="#7fba00" />
          <path d="M9.500 17h5v5h-5z" fill="#00a4ef" />
          <path d="M15.500 17h5v5h-5z" fill="#ffb900" />
        </Svg>
      </TaskButton>
      <TaskButton mark={idle} className="ml-[5px]">
        <Svg w={30} h={28}>
          <path d="M0 2q0-1 1-1h9l3 3v6H0z" fill="#e0a100" />
          <path d="M0 8h11l3-3h15q1 0 1 1v21H0z" fill="url(#folder)" />
          <path d="M5.500 27v-5q0-2 2-2h15q2 0 2 2v5z" fill="#0a77cc" />
          <path d="M9 23.500h12" stroke="#06508c" strokeWidth="1.400" />
        </Svg>
      </TaskButton>
      <TaskButton mark={idle} className="ml-[5px]">
        <Svg w={30} h={22}>
          <rect width="30" height="22" rx="1.500" fill="#474747" />
          <path d="M0 4V1.500Q0 0 1.500 0H10v4z" fill="#c9c9c9" />
          <path d="M10 0h10v4H10z" fill="#8f8f8f" />
          <path d="M20 0h8.500Q30 0 30 1.500V4H20z" fill="#6c6c6c" />
          <path d="M5 7.500l5 5.200-5 5.300" stroke="#ddd" strokeWidth="2.800" />
          <path d="M13 17.500h10" stroke="#fff" strokeWidth="2.600" />
        </Svg>
      </TaskButton>
      <TaskButton className="ml-[5px]">
        <Svg w={30} h={24}>
          <path d="M15 0l15 9-15 8L0 9z" fill="#0b63b0" />
          <path d="M15 7l9 4-9 4.500L6 11z" fill="#2f9fe0" />
          <path d="M0 9l15 8v7L0 16z" fill="#37b6fb" />
          <path d="M30 9l-15 8v7l15-8z" fill="#1d8ae2" />
        </Svg>
      </TaskButton>
      <TaskButton mark="w-[8px] bg-[#ff99a4]" className="ml-[5px] bg-[#45282a]">
        <Svg w={30} h={30}>
          <rect width="22" height="22" rx="2.500" fill="#e9e9ec" />
          <path d="M4.500 16V4.500H16" stroke="#d83b01" strokeWidth="3" strokeDasharray="3 1.800" />
          <path d="M17.500 6v15M7 17.500h14" stroke="#8d9298" strokeWidth="2.400" />
          <circle cx="26.500" cy="16" r="2.600" stroke="#2ea3e8" strokeWidth="2" />
          <circle cx="16" cy="27" r="2.400" stroke="#2ea3e8" strokeWidth="2" />
          <path d="M17 24.500l1-5.500 6-2" stroke="#2ea3e8" strokeWidth="2" />
        </Svg>
      </TaskButton>
      <TaskButton className="ml-[5px]">
        <Svg w={30} h={32}>
          <path d="M0 2l8-1v9q4-3 10-2 10 2 10 14 0 5-3 8H0z" fill="url(#bmsx)" />
          <path d="M9 15q6-2 9 4H9z" fill="#1c1c1c" />
          <text x="3" y="29" fontSize="12" fontWeight="800" fill="#fff" stroke="#222" strokeWidth="2" paintOrder="stroke" fontFamily="Open Sans" textLength="26" lengthAdjust="spacingAndGlyphs">
            MSX
          </text>
        </Svg>
      </TaskButton>
      <TaskButton mark={idle} className="ml-[5px]">
        <Svg w={22} h={30}>
          <rect y="2" width="22" height="25" fill="#56c1df" />
          <path d="M0 25h22v3l-1 2H0z" fill="#b5651d" />
          <path d="M0 25.500h22" stroke="#fff" strokeWidth="1.600" />
          <path d="M2.500 0v4M6.800 0v4M11 0v4M15.300 0v4M19.500 0v4" stroke="#1a7c99" strokeWidth="2" />
          <path d="M4 9.500h14M4 14.500h14M4 19.500h14" stroke="#12647f" strokeWidth="1.800" />
        </Svg>
      </TaskButton>
      <TaskButton mark={idle} className="ml-[5px]">
        <Svg w={30} h={23}>
          <rect x=".5" y=".5" width="29" height="22" fill="#eef5fb" stroke="#8fa5b8" />
          <path d="M2 21v-7l4 3 2-12 3 8 3 1 2 5 4-2 2-12 2 10 4-1v7z" fill="#8ecbf4" />
          <path d="M2 14l4 3 2-12 3 8 3 1 2 5 4-2 2-12 2 10 4-1" stroke="#3b9bdc" />
        </Svg>
      </TaskButton>
      <TaskButton mark={idle} className="ml-[5px]">
        <Svg w={30} h={30}>
          <rect width="30" height="30" rx="6" fill="#000" />
          <circle cx="15" cy="14" r="11.500" fill="url(#moon)" />
          <path d="M9 10.500l4-1.500q1-3 4-2.500 3 .5 3 4 2 4 0 8.500l-3 3-4 5-1-1 1-4q-2-3-.5-7 1-2.500.5-4z" fill="#050505" />
          <path d="M4 23q6-2 9-1t13-2l-3 8H8z" fill="#050505" />
        </Svg>
      </TaskButton>
      <TaskButton className="ml-[5px]">
        <Svg w={30} h={29}>
          <path d="M0 1l27-1 3 4v5H20v3l-4-3H5z" fill="#f9bd82" />
          <path d="M9 11l8 1 2 4v12H7l5-6V15z" fill="url(#crane)" />
          <path d="M20 12h10v8h-4l-6-3z" fill="#f2b78a" />
        </Svg>
      </TaskButton>
      <TaskButton mark="w-[20px] bg-[#4cc2ff]" className="ml-[5px] border border-[#333] bg-[#292929]">
        <DesignerLogo w={26} h={18} />
      </TaskButton>

      <div className="ml-auto flex items-center">
        <Svg w={14} h={9} className="mr-[22px]">
          <path d="M1 7.500l6-6 6 6" stroke="#fff" strokeWidth="1.600" />
        </Svg>
        <Svg w={20} h={17} className="mr-[23px]">
          <rect x=".8" y=".8" width="18.400" height="15.400" rx="2.500" stroke="#fff" strokeWidth="1.400" />
          <path d="M1 10.500h18M10 10.500V16" stroke="#fff" strokeWidth="1.400" />
        </Svg>
        <Svg w={16} h={20} className="mr-[31px]">
          <path d="M.8 19.500L7.500 1h1l6.700 18.500M3.200 13.500h9.600" stroke="#fff" strokeWidth="1.300" />
        </Svg>
        <span className="mr-[27px] w-[19px] text-[20px] leading-none">한</span>
        <Svg w={20} h={16} className="mr-[10px]">
          <path d="M1 6q9-9 18 0M3.500 9q6.500-6.500 13 0M6.500 12q3.500-3.500 7 0" stroke="#fff" strokeWidth="1.400" />
          <circle cx="10" cy="13.800" r="1.600" fill="#fff" />
        </Svg>
        <Svg w={20} h={16} className="mr-[10px]">
          <path d="M1 5.500h3l4-4v13l-4-4H1z" stroke="#fff" strokeWidth="1.200" />
          <path d="M11 5.500q1.500 2.500 0 5M13.500 3.500q3.500 4.500 0 9M16 1.500q5.500 6.500 0 13" stroke="#fff" strokeWidth="1.300" />
        </Svg>
        <Svg w={20} h={17} className="mr-[28px]">
          <rect x="1.300" y="4.800" width="15.700" height="10.900" rx="2" stroke="#fff" strokeWidth="1.400" />
          <path d="M6 7h9v6.500H3.500V11zM18 8h2v4h-2z" fill="#fff" />
          <path d="M4 0L1 6h3l-1 5 5-7H5l1-4z" fill="#fff" stroke="#1c1c1c" strokeWidth=".6" />
        </Svg>
        <div className="mr-[11px] flex w-[104px] flex-col pb-[2px] text-right text-[15px] leading-[20px] tracking-[0.05px] whitespace-nowrap">
          <span className="pr-[24px]">오후 1:13</span>
          <span>2023-12-09[토]</span>
        </div>
        <Svg w={18} h={20} className="mr-[25px]">
          <path d="M3 13.500V8q0-6 6-6 6 0 6 6v5.500l1.500 2.500h-15z" fill="#fff" />
          <path d="M6 17.500q3 3 6 0z" fill="#fff" />
          <path d="M6 7.500h4l-4 4.500h4" stroke="#1c1c1c" strokeWidth="1.200" />
          <path d="M12 1h5l-4 5h5" stroke="#1c1c1c" strokeWidth="3" />
          <path d="M13 1.500h4l-3.500 4.500h4" stroke="#fff" strokeWidth="1.100" />
        </Svg>
      </div>
    </div>
  );
}

export default function App() {
  return (
    <div className="relative flex h-[1080px] w-[1921px] flex-col overflow-hidden bg-[#f0f0f0] font-['Open_Sans','Noto_Sans_CJK_KR',sans-serif] text-[14.500px] leading-[20px] text-black">
      <Gradients />
      <div className="flex h-[1020px] shrink-0 flex-col border-l border-black">
        <TitleBar />
        <MenuBar />
        <ToolBar />
        <div className="flex min-h-0 flex-1">
          <WidgetBox />
          <FormEditor />
          <div className="ml-[5px] flex min-w-0 flex-1 flex-col pt-[2px]">
            <DockTitle>객체 탐색기</DockTitle>
            <Filter className="mt-[4px]" />
            <ObjectInspector />
            <div className="mt-[6px] flex flex-col">
              <DockTitle>속성 편집기</DockTitle>
              <PropertyEditor />
            </div>
            <div className="mt-[6px] flex min-h-0 flex-1 flex-col">
              <DockTitle>리소스 탐색기</DockTitle>
              <ResourceBrowser />
            </div>
          </div>
        </div>
      </div>
      <Taskbar />
      <FileMenu />
    </div>
  );
}
